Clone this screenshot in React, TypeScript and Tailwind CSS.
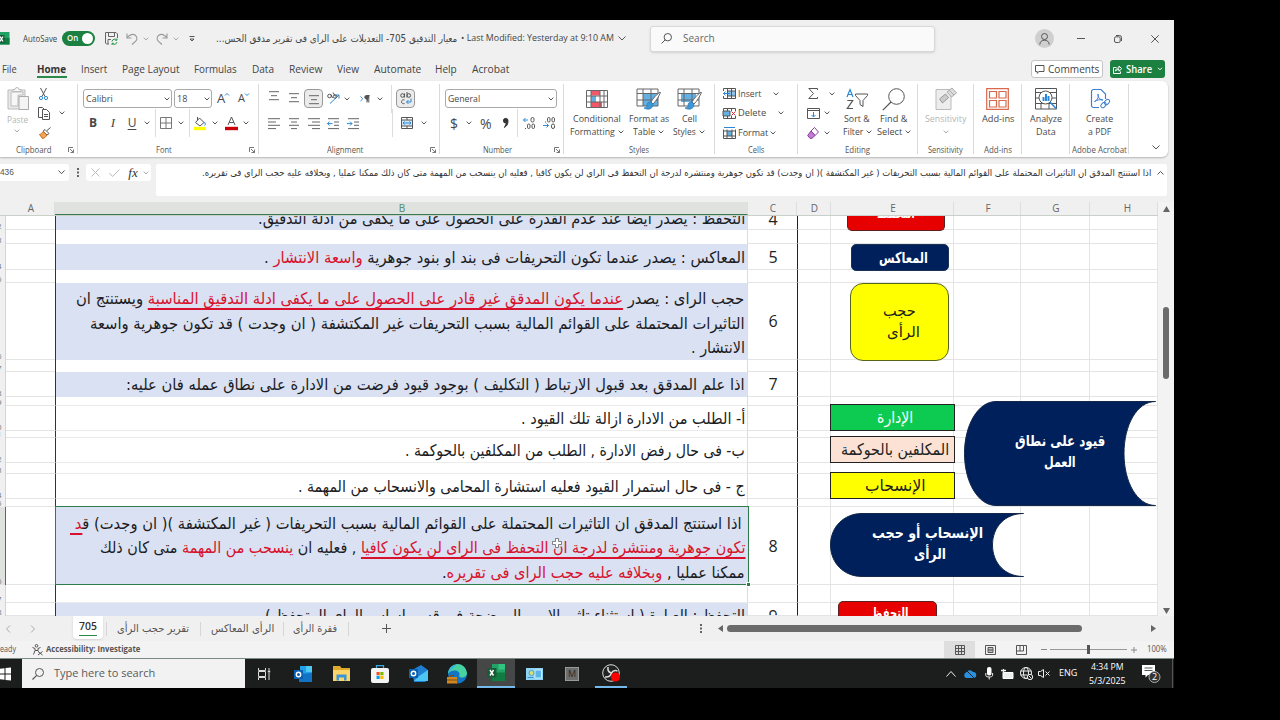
import { useLayoutEffect, useRef, type ReactNode } from 'react'
import clsx from 'clsx'

// Single line of text squeezed or stretched to a known width
function Fit({ w, rtl, className, children }: { w: number; rtl?: boolean; className?: string; children: ReactNode }) {
  const ref = useRef<HTMLSpanElement>(null)
  useLayoutEffect(() => {
    const el = ref.current
    if (el) el.style.transform = `scaleX(${w / el.offsetWidth})`
  }, [w])
  return (
    <span dir={rtl ? 'rtl' : 'ltr'} className={clsx('block shrink-0 whitespace-nowrap', className)} style={{ width: w }}>
      <span ref={ref} className={clsx('inline-block', rtl ? 'origin-right' : 'origin-left')}>
        {children}
      </span>
    </span>
  )
}

function Svg({ w, h = w, className, children }: { w: number; h?: number; className?: string; children: ReactNode }) {
  return (
    <svg width={w} height={h} viewBox={`0 0 ${w} ${h}`} fill="none" stroke="#555" strokeWidth="1" className={clsx('block shrink-0 overflow-visible', className)}>
      {children}
    </svg>
  )
}

function Cell({ className, children }: { className?: string; children?: ReactNode }) {
  return <div className={clsx('flex shrink-0 items-center justify-center', className)}>{children}</div>
}

function Chev({ light }: { light?: boolean }) {
  return (
    <Svg w={6} h={4}>
      <path d="M.7.6 3 3 5.3.6" stroke={light ? '#aaa' : '#555'} />
    </Svg>
  )
}

const Sep = () => <div className="h-[28px] w-px bg-[#dcdcdc]" />

function Lines({ rows }: { rows: number[][] }) {
  return (
    <Svg w={12} h={11}>
      {rows.map(([a, b], i) => (
        <path key={i} d={`M${a} ${i * (rows.length > 3 ? 3.3 : 4) + 0.7}H${b}`} stroke="#666" />
      ))}
    </Svg>
  )
}

const Launcher = () => (
  <Svg w={6}>
    <path d="M.5 5V.5H5M2 2l3.5 3.5M5.5 2.500v3h-3" stroke="#666" strokeWidth=".9" />
  </Svg>
)

function Group({ className, label, labelW, launcher, children }: { className: string; label?: string; labelW?: number; launcher?: boolean; children: ReactNode }) {
  return (
    <div className={clsx('flex shrink-0 flex-col', className)}>
      <div className="flex h-[61px] items-start">{children}</div>
      <div className="flex h-[15px] items-center">
        <div className="flex flex-1 justify-center">
          {label && (
            <Fit w={labelW ?? 30} className="text-[8.5px] leading-[14px] text-[#555]">
              {label}
            </Fit>
          )}
        </div>
        {launcher && (
          <div className="mr-[3px]">
            <Launcher />
          </div>
        )}
      </div>
    </div>
  )
}

const Rule = () => <div className="mt-[3px] h-[70px] w-px shrink-0 bg-[#dadada]" />

function Big({ className, icon, a, aw, b, bw, chev, dim }: { className: string; icon: ReactNode; a: string; aw: number; b?: string; bw?: number; chev?: boolean; dim?: boolean }) {
  return (
    <div className={clsx('flex shrink-0 flex-col items-center text-[9.5px] leading-[13px]', className, dim ? 'text-[#b5b5b5]' : 'text-[#484848]')}>
      <div className="flex h-[31px] items-center pt-[5px]">{icon}</div>
      <Fit w={aw}>{a}</Fit>
      <div className="flex h-[13px] items-center gap-[3px]">
        {b && <Fit w={bw ?? 20}>{b}</Fit>}
        {chev && <Chev light={dim} />}
      </div>
    </div>
  )
}

const TABS: [string, number, string][] = [
  ['File', 15, 'ml-[2px]'],
  ['Home', 29, 'ml-[20px]'],
  ['Insert', 26, 'ml-[15px]'],
  ['Page Layout', 58, 'ml-[15px]'],
  ['Formulas', 43, 'ml-[14px]'],
  ['Data', 22, 'ml-[15px]'],
  ['Review', 33, 'ml-[15px]'],
  ['View', 22, 'ml-[15px]'],
  ['Automate', 47, 'ml-[15px]'],
  ['Help', 22, 'ml-[14px]'],
  ['Acrobat', 37, 'ml-[15px]'],
]

function TitleBar() {
  return (
    <div className="flex h-[37px] shrink-0 items-center text-[#444]">
      <Svg w={10} h={13}>
        <path d="M0 0h9.5v12.500H0z" fill="#21a366" stroke="none" />
        <path d="M0 6h9.500v6.500H0z" fill="#107c41" stroke="none" />
        <path d="M0 3h4.500v8H0z" fill="#185c37" stroke="none" />
        <path d="m0 4.500 3 5m0-5-3 5" stroke="#fff" strokeWidth="1.300" />
      </Svg>
      <Fit w={34} className="ml-[13px] text-[9px]">AutoSave</Fit>
      <div className="ml-[5px] flex h-[15px] w-[33px] items-center justify-between rounded-full bg-[#1b8040] pr-[2px] pl-[5px]">
        <Fit w={11} className="text-[8.5px] font-semibold text-white">On</Fit>
        <div className="h-[11px] w-[11px] rounded-full bg-white" />
      </div>
      <Cell className="ml-[8px] w-[16px]">
        <Svg w={13}>
          <path d="M4 12H1.500L.5 11V.5H11L12.500 2v4M3.500.5v4h6v-4M3 12V7.500h3" stroke="#666" />
          <path d="M7 9.500a2.800 2.800 0 0 1 5-1.300V6.500m0 3.500a2.800 2.800 0 0 1-5 1.300V13m5-4.800h-2M7 11.300h2" stroke="#2f9a4f" />
        </Svg>
      </Cell>
      <Cell className="ml-[5px] w-[16px]">
        <Svg w={12}>
          <path d="M1 .5v4.500h4.500M1.200 4.700C3.500 1.500 7 .5 9.300 2.300c2.200 1.800 2 4.500.2 6L6 11.500" stroke="#999" strokeWidth="1.100" />
        </Svg>
      </Cell>
      <Cell className="w-[12px]"><Chev light /></Cell>
      <Cell className="ml-[2px] w-[16px]">
        <Svg w={12}>
          <path d="M11 .5v4.500H6.500M10.800 4.700C8.500 1.500 5 .5 2.700 2.300c-2.200 1.800-2 4.500-.2 6L6 11.500" stroke="#999" strokeWidth="1.100" />
        </Svg>
      </Cell>
      <Cell className="w-[12px]"><Chev light /></Cell>
      <Cell className="ml-[4px] w-[12px]">
        <Svg w={6} h={6}><path d="M.5.5h5M1 3l2 2 2-2z" /></Svg>
      </Cell>
      <Fit w={241} rtl className="ml-[18px] font-[DejaVu_Sans] text-[10px]">معيار التدقيق 705- التعديلات على الراى فى تقرير مدقق الحس...</Fit>
      <Fit w={153} className="ml-[4px] text-[9.5px]">• Last Modified: Yesterday at 9:10 AM</Fit>
      <Cell className="ml-[3px] w-[10px]">
        <Svg w={8} h={5}><path d="m.5.5 3.500 3.500L7.500.5" /></Svg>
      </Cell>
      <div className="ml-[23px] flex h-[26px] w-[285px] items-center rounded-[3px] border border-[#d8d8d8] bg-[#fafafa] pl-[10px] shadow-sm">
        <Svg w={11}><circle cx="6.800" cy="4.200" r="3.700" /><path d="M4.200 6.800.5 10.500" /></Svg>
        <Fit w={32} className="ml-[11px] text-[10px] text-[#666]">Search</Fit>
      </div>
      <div className="ml-[100px] flex h-[19px] w-[19px] items-center justify-center rounded-full bg-[#cfcfcf]">
        <Svg w={11} h={12}><circle cx="5.500" cy="3.500" r="3" /><path d="M.8 11.500C1 8.500 3 7.200 5.500 7.200s4.500 1.300 4.700 4.300" /></Svg>
      </div>
      <Cell className="ml-[19px] w-[16px]"><div className="h-px w-[8px] bg-[#555]" /></Cell>
      <Cell className="ml-[21px] w-[16px]">
        <Svg w={8}><rect x=".5" y="1.800" width="5.700" height="5.700" rx="1.500" /><path d="M2 .5h3.500a2 2 0 0 1 2 2V6" /></Svg>
      </Cell>
      <Cell className="ml-[21px] w-[16px]"><Svg w={8}><path d="m.3.3 7.400 7.400m0-7.400L.3 7.700" /></Svg></Cell>
    </div>
  )
}

function TabBar() {
  return (
    <div className="flex h-[24px] shrink-0 text-[10.5px] leading-[24px] text-[#444]">
      {TABS.map(([label, w, ml]) => (
        <div key={label} className={clsx('relative', ml, label === 'Home' && 'font-bold text-[#333]')}>
          <Fit w={w}>{label}</Fit>
          {label === 'Home' && <span className="absolute top-[19px] left-0 h-[2px] w-[30px] bg-[#2b8a4b]" />}
        </div>
      ))}
      <div className="ml-[522px] mt-[3px] flex h-[18px] w-[72px] items-center rounded-[3px] border border-[#c4c4c4] bg-white pl-[3px]">
        <Svg w={10} h={9}><path d="M.5.5h8.500v6H4L2.200 8.300V6.500H.5z" /></Svg>
        <Fit w={51} className="ml-[3px]">Comments</Fit>
      </div>
      <div className="ml-[7px] mt-[3px] flex h-[18px] w-[55px] items-center rounded-[3px] bg-[#1b8040] pl-[3px] text-white">
        <Svg w={9}><path d="M3.500 2.500H.5v6h7V6.500M2.500 6c.3-2 1.500-3 3.500-3V1l2.700 2.700L6 6.200V4.500C4.500 4.500 3.300 5 2.500 6z" stroke="#fff" /></Svg>
        <Fit w={26} className="ml-[4px] font-semibold">Share</Fit>
        <Svg w={6} h={4} className="ml-[5px]"><path d="M1 .8 3 2.800 5 .8" stroke="#fff" /></Svg>
      </div>
    </div>
  )
}

const TableIcon = ({ fill }: { fill: string }) => (
  <Svg w={25} h={22}>
    <path d={fill} fill="#63b0e3" stroke="none" />
    <path d="M1 1h21v17H1zM1 5.500h21M1 12h21M7 1v17M15 1v17" stroke="#666" />
    <path d="M24 4c-4 3-7 6.500-9 10l2 2c3-3 5.500-7 7.500-11.500z" fill="#fff" stroke="#666" />
    <path d="M15 14c-3-.5-4 1.500-4 3.500 0 1.500-1.500 2.500-3 2.500 3 2 9 2 9-4z" fill="#3d96d6" stroke="#2a7ab8" strokeWidth=".7" />
  </Svg>
)

function Ribbon() {
  return (
    <div className="flex h-[76px] w-[1168px] shrink-0 rounded-r-[6px] bg-white text-[#484848] shadow-[0_1px_2px_rgba(0,0,0,0.25)]">
      <Group className="w-[77px]" label="Clipboard" labelW={36} launcher>
        <div className="flex w-[34px] flex-col items-center pt-[6px]">
          <Svg w={23} h={23} className="ml-[3px]">
            <path d="M1 3h17v19H1z" fill="#e9e9e9" stroke="#bbb" />
            <path d="M6 4.500V2.500h2a2 2 0 0 1 4 0h2v2zM4 5v14h7V8h5V5z" fill="#f7f7f7" stroke="#bbb" />
            <path d="M12 9.500h9.500v13H12z" fill="#f4f4f4" stroke="#aaa" />
          </Svg>
          <Fit w={21} className="mt-[3px] text-[9.5px] leading-[13px] text-[#b5b5b5]">Paste</Fit>
          <div className="mt-[3px]"><Chev light /></div>
        </div>
        <div className="flex flex-col pt-[3px]">
          <Cell className="h-[19px] w-[19px]">
            <Svg w={9} h={12}>
              <path d="M1.500 0 6 8.500M7.500 0 3 8.500" /><circle cx="2" cy="10" r="1.600" stroke="#2b88d8" /><circle cx="7" cy="10" r="1.600" stroke="#2b88d8" />
            </Svg>
          </Cell>
          <div className="flex h-[20px] items-center">
            <Cell className="w-[19px]">
              <Svg w={12} h={13}><path d="M5 10.500H.5v-10H4.500l2 2M4.500 2.500h4l3 3v7h-7z" /><path d="M6 7.500h4M6 9.500h4" /></Svg>
            </Cell>
            <Cell className="w-[17px]"><Chev /></Cell>
          </div>
          <Cell className="h-[19px] w-[21px]">
            <Svg w={12} h={12}><path d="M11.500.5 8 3.500M6 2.500l4 4-2 1.500-4-3.700z" stroke="#555" /><path d="M4 4.500 7.800 8C7 10 5 11.500 3.500 11.500L.5 7.500C2 7.300 3 6 4 4.500z" fill="#f2a45c" stroke="#c96a18" /></Svg>
          </Cell>
        </div>
      </Group>
      <Rule />
      <Group className="w-[180px]" label="Font" labelW={16} launcher>
        <div className="flex flex-col pt-[8px]">
          <div className="flex h-[19px] items-center text-[9px]">
            <div className="ml-[5px] flex h-[19px] w-[89px] items-center justify-between rounded-[3px] border border-[#aaa] px-[2px] pr-[1px]">
              <Fit w={27}>Calibri</Fit><Chev />
            </div>
            <div className="ml-[2px] flex h-[19px] w-[38px] items-center justify-between rounded-[3px] border border-[#aaa] px-[2px] pr-[1px]">
              <Fit w={10}>18</Fit><Chev />
            </div>
            <Cell className="w-[21px] pl-[1px] text-[13px]">A<span className="-mt-2"><Svg w={4} h={3}><path d="M0 2.500 2 .5l2 2" stroke="#2b88d8" /></Svg></span></Cell>
            <Cell className="w-[21px] text-[11px]">A<span className="-mt-2"><Svg w={4} h={3}><path d="m0 .5 2 2 2-2" stroke="#2b88d8" /></Svg></span></Cell>
          </div>
          <div className="mt-[1px] flex h-[28px] items-center text-[12px]">
            <Cell className="ml-[5px] w-[20px] font-bold">B</Cell>
            <Cell className="w-[20px] font-[Liberation_Serif] text-[13px] italic">I</Cell>
            <Cell className="w-[18px] underline underline-offset-2">U</Cell>
            <Cell className="w-[12px]"><Chev /></Cell>
            <Cell className="w-[4px]"><Sep /></Cell>
            <Cell className="w-[18px]"><Svg w={12}><path d="M.5.5h11v11H.5zM6 .5v11M.5 6h11" stroke="#777" /></Svg></Cell>
            <Cell className="w-[12px]"><Chev /></Cell>
            <Cell className="w-[4px]"><Sep /></Cell>
            <Cell className="w-[18px]">
              <Svg w={12} h={13}><path d="m5.500 1 4.500 4.500L6 9 1.500 5.500zM3.500 0v3.500" /><path d="M10.500 5c1 1.500 1 3 0 3.500" stroke="#2b88d8" /><path d="M0 11.500h12" stroke="#ffff00" strokeWidth="3.400" /></Svg>
            </Cell>
            <Cell className="w-[11px]"><Chev /></Cell>
            <Cell className="w-[22px]">
              <Svg w={13} h={13}><path d="M3 8 6.500 0 10 8M4.200 5.500h4.600" /><path d="M0 11.500h13" stroke="#c8000b" strokeWidth="3.400" /></Svg>
            </Cell>
            <Cell className="w-[7px]"><Chev /></Cell>
          </div>
        </div>
      </Group>
      <Rule />
      <Group className="w-[180px]" label="Alignment" labelW={36} launcher>
        <div className="flex flex-col pt-[8px]">
          <div className="flex h-[19px] items-center">
            <Cell className="ml-[5px] h-[15px] w-[20px] items-start"><Lines rows={[[1, 11], [3, 9], [1, 11]]} /></Cell>
            <Cell className="w-[20px]"><Lines rows={[[1, 11], [3, 9], [1, 11]]} /></Cell>
            <Cell className="h-[19px] w-[19px] items-end rounded-[4px] border border-[#999] bg-[#ebebeb] pb-[1px]"><Lines rows={[[1, 11], [3, 9], [1, 11]]} /></Cell>
            <Cell className="w-[20px]">
              <Svg w={13}><path d="M3 11.500 12 3m-3.500 0H12v3.500" stroke="#2b88d8" /><circle cx="2.500" cy="4" r="1.800" /><path d="M4 2.500 5.500 6M6 .5l2.500 4" /><circle cx="8" cy="4.500" r="1.700" /></Svg>
            </Cell>
            <Cell className="w-[7px]"><Chev /></Cell>
            <Cell className="ml-[5px] w-[20px]"><Svg w={10} h={8}><path d="m.5 1.500 2.300 2.300L.5 6" stroke="#2b88d8" /><path d="M9.500.5H6.500a1.700 1.700 0 0 0 0 3.500H7V.5v7m1.800-7v7" fill="#555" /></Svg></Cell>
            <Cell className="w-[10px]"><Chev /></Cell>
            <Cell className="ml-[4px] w-[4px]"><Sep /></Cell>
            <Cell className="ml-[3px] h-[19px] w-[19px] rounded-[4px] border border-[#999] bg-[#ebebeb]">
              <Svg w={12} h={13}><circle cx="2.500" cy="3.500" r="1.800" /><path d="M4.500 1.500v4M7 0v5.500" /><circle cx="8.800" cy="3.500" r="1.800" /><path d="M4.500 8a2 2 0 1 0 0 3.500" /><path d="M11 6.500v3.500H6.500m2-2-2 2 2 2" stroke="#2b88d8" /></Svg>
            </Cell>
          </div>
          <div className="mt-[1px] flex h-[28px] items-center">
            <Cell className="ml-[5px] w-[20px]"><Lines rows={[[0, 12], [0, 8], [0, 12], [0, 8]]} /></Cell>
            <Cell className="w-[20px]"><Lines rows={[[1, 11], [3, 9], [1, 11], [3, 9]]} /></Cell>
            <Cell className="w-[19px]"><Lines rows={[[0, 12], [4, 12], [0, 12], [4, 12]]} /></Cell>
            <Cell className="w-[20px]"><Svg w={12} h={11}><path d="M1 .7h11M7 4h5M7 7.300h5M1 10.600h11" stroke="#666" /><path d="M5.500 5.600H.5m2-2-2 2 2 2" stroke="#2b88d8" /></Svg></Cell>
            <Cell className="w-[20px]"><Svg w={12} h={11}><path d="M1 .7h11M7 4h5M7 7.300h5M1 10.600h11" stroke="#666" /><path d="M0 5.600h5m-2-2 2 2-2 2" stroke="#2b88d8" /></Svg></Cell>
            <Cell className="ml-[27px] w-[4px]"><Sep /></Cell>
            <Cell className="ml-[3px] w-[19px]"><Svg w={12}><path d="M0 3h12v6H0z" fill="#cfe6f7" stroke="none" /><path d="M.5.5h11v11H.5zM.5 3h11M.5 9h11M6 .5V3M6 9v2.500" /><path d="M2 6h8M3.500 4.500 2 6l1.500 1.500m5-3L10 6 8.500 7.500" stroke="#2b88d8" /></Svg></Cell>
            <Cell className="w-[16px]"><Chev /></Cell>
          </div>
        </div>
      </Group>
      <Rule />
      <Group className="w-[123px]" label="Number" labelW={29} launcher>
        <div className="flex flex-col pt-[8px]">
          <div className="ml-[5px] flex h-[19px] w-[112px] items-center justify-between rounded-[3px] border border-[#aaa] px-[2px] text-[9px]">
            <Fit w={32}>General</Fit><Chev />
          </div>
          <div className="mt-[1px] flex h-[28px] items-center text-[14px]">
            <Cell className="ml-[4px] w-[20px]">$</Cell>
            <Cell className="w-[10px]"><Chev /></Cell>
            <Cell className="ml-[1px] w-[22px]"><Fit w={12}>%</Fit></Cell>
            <Cell className="w-[18px]"><Svg w={6} h={10}><path d="M1 9.500c2.500-1 4-3 4-6.500A2.300 2.300 0 1 0 3 5" fill="#333" stroke="#333" /></Svg></Cell>
            <Cell className="w-[4px]"><Sep /></Cell>
            <Cell className="w-[19px]"><Svg w={12} h={12}><path d="M5 3H.5m2-2-2 2 2 2" stroke="#2b88d8" /><rect x="8" y=".5" width="3" height="4.500" rx="1.500" /><rect x="4.500" y="7" width="2.500" height="4.500" rx="1.200" /><rect x="9" y="7" width="2.500" height="4.500" rx="1.200" /><path d="M2 11.500h1" /></Svg></Cell>
            <Cell className="w-[21px]"><Svg w={12} h={12}><path d="M0 8.500h5.500m-2-2 2 2-2 2" stroke="#2b88d8" /><rect x="4.500" y=".5" width="2.500" height="4.500" rx="1.200" /><rect x="9" y=".5" width="2.500" height="4.500" rx="1.200" /><rect x="8.500" y="7" width="3" height="4.500" rx="1.500" /><path d="M2 5h1" /></Svg></Cell>
          </div>
        </div>
      </Group>
      <Rule />
      <Group className="w-[150px]" label="Styles" labelW={20}>
        <Big className="ml-[6px] w-[54px]" a="Conditional" aw={48} b="Formatting" bw={45} chev
          icon={<Svg w={22} h={18}><path d="M5 .5h9v5H5zM5 12h11v5.500H5z" fill="#f1596b" stroke="none" /><path d="M5 6h5v6H5z" fill="#63b0e3" stroke="none" /><path d="M.5.5h21v17H.5zM.5 6h21M.5 12h21M5 .5v17M14 .5v17M18 .5v17" stroke="#666" /></Svg>} />
        <Big className="w-[49px]" a="Format as" aw={40} b="Table" bw={22} chev icon={<TableIcon fill="M7 5.500h15V18H7z" />} />
        <Big className="w-[32px]" a="Cell" aw={15} b="Styles" bw={23} chev icon={<TableIcon fill="M4 5h15v9H4z" />} />
      </Group>
      <Rule />
      <Group className="w-[82px]" label="Cells" labelW={16}>
        <div className="flex flex-col pt-[3px] pl-[8px] text-[9px]">
          <div className="flex h-[19px] items-center">
            <Svg w={13} h={11}><path d="M4 3h8.500v5H4z" fill="#8cc4ea" stroke="none" /><path d="M.5 3V.5h12v10H.5V8M4.500.5v10M8.500.5v10M4 3h8.500M4 8h8.500" /><path d="M7 5.500H.5m2-2-2 2 2 2" stroke="#2b88d8" /></Svg>
            <Fit w={23} className="ml-[2px]">Insert</Fit><span className="ml-[12px]"><Chev /></span>
          </div>
          <div className="flex h-[20px] items-center">
            <Svg w={13} h={11}><path d="M0 3h7v5H0z" fill="#63b0e3" stroke="none" /><path d="M.5 3V.5h12V3M.5 8v2.500h12V8M4.500.5V3M8.500.5V3M4.500 8v2.500M8.500 8v2.500M0 3h7v5H0z" /><path d="m8.500 3.500 4 4m0-4-4 4" stroke="#d13438" /></Svg>
            <Fit w={28} className="ml-[2px]">Delete</Fit><span className="ml-[12px]"><Chev /></span>
          </div>
          <div className="flex h-[19px] items-center">
            <Svg w={13} h={12}><path d="M4 4h5v5H4z" fill="#63b0e3" stroke="none" /><path d="M.5 2.500v9h12v-9M.5 4h12M.5 9h12M4 2.500v9M9 2.500v9" /><path d="M1 .5h11" stroke="#2b88d8" /></Svg>
            <Fit w={30} className="ml-[2px]">Format</Fit><span className="ml-[2px]"><Chev /></span>
          </div>
        </div>
      </Group>
      <Rule />
      <Group className="w-[119px]" label="Editing" labelW={25}>
        <div className="flex w-[40px] flex-col pt-[3px]">
          <div className="flex h-[19px] items-center"><Cell className="ml-[5px] w-[20px]"><Svg w={10} h={11}><path d="M9.500 2V.5H.8L5.500 5.500.8 10.500h8.700V9" /></Svg></Cell><Cell className="w-[18px]"><Chev /></Cell></div>
          <div className="flex h-[20px] items-center"><Cell className="ml-[5px] w-[20px]"><Svg w={13} h={11}><path d="M.5.5h12v10H.5zM.5 2.500h12" /><path d="M6.500 4v5m-2-2 2 2 2-2" stroke="#2b88d8" /></Svg></Cell><Cell className="w-[8px]"><Chev /></Cell></div>
          <div className="flex h-[19px] items-center"><Cell className="ml-[5px] w-[20px]"><Svg w={12} h={12}><path d="M7.500.5 11.500 5 8 8.500 4 4z" fill="#fff" stroke="#8a3ca0" /><path d="M4 4 8 8.500 5 11.300H3L.7 8.500z" fill="#c57bd6" stroke="#8a3ca0" /></Svg></Cell><Cell className="w-[8px]"><Chev /></Cell></div>
        </div>
        <Big className="w-[38px]" a="Sort &" aw={26} b="Filter" bw={20} chev
          icon={<Svg w={22} h={22}><path d="M1 9 4 1.500 7 9M2 6.500h4" stroke="#2b88d8" strokeWidth="1.200" /><path d="M1.300 12.500h5.400L1.300 20.500h5.700" strokeWidth="1.200" /><path d="M9.500 6h12v1.500L17 12.500v6L14 16.500v-4L9.500 7.500z" /></Svg>} />
        <Big className="w-[35px]" a="Find &" aw={27} b="Select" bw={25} chev
          icon={<Svg w={23} h={23}><circle cx="14.500" cy="8.500" r="7.800" /><path d="M9 14 .8 22.200" strokeWidth="1.200" /></Svg>} />
      </Group>
      <Rule />
      <Group className="w-[55px]" label="Sensitivity" labelW={35}>
        <Big className="w-[55px]" a="Sensitivity" aw={41} chev dim
          icon={<Svg w={22} h={22}><path d="M1 1.500h15v20H1z" fill="#ededed" stroke="#bbb" /><path d="m4.500 11 6-5 3 3.500-6 5.500z" fill="#ccc" stroke="#999" /><path d="m12 4 5-4 4.500 5-5 4z" fill="#ddd" stroke="#aaa" /><path d="m14 2 5 5" stroke="#aaa" /></Svg>} />
      </Group>
      <Rule />
      <Group className="w-[47px]" label="Add-ins" labelW={28}>
        <Big className="w-[47px]" a="Add-ins" aw={32}
          icon={<Svg w={23} h={22}><path d="M.7.7h21.600v20.600H.7zM3.500 3.500h7v6.500h-7zM13 3.500h7v6.500h-7zM3.500 12.500h7V19h-7zM13 12.500h7V19h-7z" stroke="#d9694c" strokeWidth="1.200" /></Svg>} />
      </Group>
      <Rule />
      <Group className="w-[47px]">
        <Big className="w-[47px]" a="Analyze" aw={32} b="Data" bw={20}
          icon={<Svg w={22} h={22}><path d="M.5.5h21v20.500H.5zM.5 4.500h21M.5 10h21M.5 15.500h21M6 15.500v5.500M14 15.500v5.500" /><circle cx="10.500" cy="9.500" r="6.500" fill="#fff" /><path d="M7.500 9h2v4h-2zM10 6h2v7h-2zM12.500 8h2v5h-2z" fill="#2b88d8" stroke="none" /><path d="m15 14 6.500 7" stroke="#2b88d8" strokeWidth="1.500" /></Svg>} />
      </Group>
      <Rule />
      <Group className="w-[58px]" label="Adobe Acrobat" labelW={55}>
        <Big className="w-[58px]" a="Create" aw={27} b="a PDF" bw={23}
          icon={<Svg w={20} h={22} className="ml-1"><path d="M8 19.500H2.500a2 2 0 0 1-2-2v-14a2 2 0 0 1 2-2H10l4.500 4.500v5" stroke="#3f7fd0" strokeWidth="1.200" /><path d="M3.500 13.500C7 12 8 8 7 6c-.5 3 2 6 5 6-3-.8-6 0-8.500 1.500z" stroke="#3f7fd0" /><rect x="9.500" y="15" width="6" height="4" rx="2" transform="rotate(-45 12.500 17)" stroke="#3f7fd0" /><rect x="13" y="12" width="6" height="4" rx="2" transform="rotate(-45 16 14)" stroke="#3f7fd0" /></Svg>} />
      </Group>
      <Rule />
      <div className="flex flex-1 items-end justify-end pr-[8px] pb-[7px]">
        <Svg w={8} h={5}><path d="m.5.5 3.500 3.500L7.500.5" /></Svg>
      </div>
    </div>
  )
}

function FormulaBar() {
  return (
    <div className="flex h-[45px] shrink-0 items-start pt-[7px]">
      <div className="flex h-[17px] w-[69px] items-center justify-between rounded-r-[3px] bg-white pr-[4px] font-[Liberation_Sans] text-[9.5px] text-[#555]">
        <Fit w={14}>436</Fit>
        <Svg w={7} h={5}><path d="m.5.5 3 3.200 3-3.200" /></Svg>
      </div>
      <Cell className="ml-[6px] h-[17px] w-[6px]"><Svg w={2} h={9}><path d="M1 0v2M1 3.500v2M1 7v2" strokeWidth="1.800" /></Svg></Cell>
      <div className="ml-[5px] flex h-[17px] w-[65px] items-center rounded-[3px] bg-white">
        <Cell className="w-[19px]"><Svg w={9}><path d="m.5.5 8 8m0-8-8 8" stroke="#bbb" /></Svg></Cell>
        <Cell className="w-[19px]"><Svg w={11} h={8}><path d="m.5 4 3 3.500L10.500.5" stroke="#bbb" /></Svg></Cell>
        <Cell className="w-[18px] font-[Liberation_Serif] text-[13px] italic text-[#333]">fx</Cell>
        <Cell className="w-[8px]"><Chev light /></Cell>
      </div>
      <div className="ml-[5px] flex h-[32px] w-[1011px] items-start justify-end rounded-[2px] bg-white pr-[3px]">
        <Fit w={949} rtl className="font-[DejaVu_Sans] text-[9.5px] leading-[17px] text-[#333]">
          اذا استنتج المدقق ان التاثيرات المحتملة على القوائم المالية بسبب التحريفات ( غير المكتشفة )( ان وجدت) قد تكون جوهرية ومنتشره لدرجة ان التحفظ فى الراى لن يكون كافيا , فعليه ان ينسحب من المهمة متى كان ذلك ممكنا عمليا , وبخلافه عليه حجب الراى فى تقريره.
        </Fit>
        <Svg w={7} h={4} className="mt-[7px] ml-[6px]"><path d="M.5 3.500 3.500.5l3 3" /></Svg>
      </div>
    </div>
  )
}

const COLS: [string, string][] = [
  ['A', 'w-[49px]'],
  ['B', 'w-[693px]'],
  ['C', 'w-[49px]'],
  ['D', 'w-[34px]'],
  ['E', 'w-[123px]'],
  ['F', 'w-[67px]'],
  ['G', 'w-[69px]'],
  ['H', 'w-[68px]'],
]

const Red = ({ u, children }: { u?: boolean; children: ReactNode }) => (
  <span className={clsx('text-[#d8122c]', u && 'underline decoration-[1.5px] underline-offset-[4px]')}>{children}</span>
)

interface Row {
  h: string
  num?: string
  fill?: boolean
  head?: string
  lines?: { w: number; pr?: string; text: ReactNode }[]
  pt?: string
  shift?: string
}

const ROWS: Row[] = [
  { h: 'h-[14px]', num: '4', fill: true, head: '2', shift: '-mt-[8px]', lines: [{ w: 487, text: 'التحفظ : يصدر ايضا عند عدم القدرة على الحصول على ما يكفى من ادلة التدقيق.' }] },
  { h: 'h-[14px]', head: '3' },
  { h: 'h-[26px]', num: '5', fill: true, head: '4', pt: 'pt-[2px]', lines: [{ w: 481, text: <>المعاكس : يصدر عندما تكون التحريفات فى بند او بنود جوهرية <Red>واسعة الانتشار</Red> .</> }] },
  { h: 'h-[13px]', head: '5' },
  {
    h: 'h-[77px]', num: '6', fill: true, head: '6', pt: 'pt-[4px]',
    lines: [
      { w: 668, pr: 'pr-[3px]', text: <>حجب الراى : يصدر <Red u>عندما يكون المدقق غير قادر على الحصول على ما يكفى ادلة التدقيق المناسبة</Red> ويستنتج ان</> },
      { w: 655, text: 'التاثيرات المحتملة على القوائم المالية بسبب التحريفات غير المكتشفة ( ان وجدت ) قد تكون جوهرية واسعة' },
      { w: 54, text: 'الانتشار .' },
    ],
  },
  { h: 'h-[12px]', head: '7' },
  { h: 'h-[25px]', num: '7', fill: true, head: '8', pt: 'pt-[1px]', lines: [{ w: 619, text: 'اذا علم المدقق بعد قبول الارتباط ( التكليف ) بوجود قيود فرضت من الادارة على نطاق عمله فان عليه:' }] },
  { h: 'h-[9px]', head: '9' },
  { h: 'h-[25px]', head: '0', pt: 'pt-[1px]', lines: [{ w: 224, text: 'أ- الطلب من الادارة ازالة تلك القيود .' }] },
  { h: 'h-[7px]', head: '1' },
  { h: 'h-[25px]', head: '2', pt: 'pt-[2px]', lines: [{ w: 340, text: 'ب- فى حال رفض الادارة , الطلب من المكلفين بالحوكمة .' }] },
  { h: 'h-[11px]', head: '3' },
  { h: 'h-[25px]', head: '4', pt: 'pt-[2px]', lines: [{ w: 447, text: 'ج - فى حال استمرار القيود فعليه استشارة المحامى والانسحاب من المهمة .' }] },
  { h: 'h-[8px]', head: '5' },
  {
    h: 'h-[78px]', num: '8', fill: true, head: '6', pt: 'pt-[4px]',
    lines: [
      { w: 672, pr: 'pr-[5px]', text: <>اذا استنتج المدقق ان التاثيرات المحتملة على القوائم المالية بسبب التحريفات ( غير المكتشفة )( ان وجدت) ق<Red u>د&nbsp;</Red></> },
      { w: 646, text: <><Red u>تكون جوهرية ومنتشرة لدرجة ان التحفظ فى الراى لن يكون كافيا</Red> , فعليه ان <Red>ينسحب من المهمة</Red> متى كان ذلك</> },
      { w: 303, text: <>ممكنا عمليا , <Red>وبخلافه عليه حجب الراى فى تقريره</Red>.</> },
    ],
  },
  { h: 'h-[18px]', head: '7' },
  { h: 'h-[13px]', num: '9', fill: true, head: '8', shift: 'mt-[13px]', lines: [{ w: 480, text: 'التحفظ : العبارة (باستثناء تاثير الامور الموضحة فى قسم اساس الراى المتحفظ )' }] },
]

function Sheet() {
  return (
    <div className="flex h-[414px] shrink-0">
      <div className="relative flex w-[1158px] flex-col overflow-hidden">
        <div className="flex h-[14px] shrink-0 border-b border-[#c9cfc9] text-[10px] leading-[13px] text-[#666]">
          <div className="w-[6px]" />
          {COLS.map(([c, w]) => (
            <div
              key={c}
              className={clsx(
                'flex shrink-0 items-center justify-center border-r border-[#dedede]',
                w,
                c === 'H' ? 'pl-[8px]' : 'pl-[2px]',
                c === 'B' && 'border-b border-b-[#3a7d50] bg-[#dfe2df] text-[#4f8a63]'
              )}
            >
              {c}
            </div>
          ))}
        </div>
        <div className="flex h-[400px] shrink-0 flex-col bg-white">
          {ROWS.map((r, i) => (
            <div key={i} className={clsx('flex shrink-0', r.h)}>
              <div className={clsx('flex w-[6px] items-end overflow-hidden border-r text-[8px] leading-[8px] text-[#777]', r.num === '8' ? 'border-[#3a7d50] bg-[#dfe2df]' : 'border-[#d4d4d4] bg-[#f0f0f0]')}>
                <span className="-ml-[3px]">{r.head}</span>
              </div>
              <div className="w-[49px] border-b border-[#e4e4e4]" />
              <div className={clsx('flex w-[693px] flex-col justify-center overflow-hidden border-r border-l border-r-[#dcdcdc] border-l-[#333]', r.pt, r.fill ? 'bg-[#d9e1f2]' : i > 6 && 'border-b border-b-[#ececec]')}>
                {r.lines?.map((l, k) => (
                  <div key={k} className={clsx('flex h-[24.5px] shrink-0 items-center justify-end', l.pr ?? 'pr-[2px]', r.shift)}>
                    <Fit w={l.w} rtl className="font-[DejaVu_Sans] text-[16px] leading-[24px] text-[#1c1c24]">{l.text}</Fit>
                  </div>
                ))}
              </div>
              <div className="flex w-[50px] items-center justify-center overflow-hidden border-r border-b border-r-[#222] border-b-[#e4e4e4] pl-[1px] text-[16px] text-[#222]">
                {r.num && <span className={clsx('h-[24px] leading-[25px]', r.shift)}>{r.num}</span>}
              </div>
              {COLS.slice(3).map(([c, w]) => (
                <div key={c} className={clsx('shrink-0 border-r border-b border-[#e4e4e4]', c === 'D' ? 'w-[33px]' : w)} />
              ))}
            </div>
          ))}
        </div>
        <Shapes />
      </div>
      <div className="flex w-[16px] flex-col items-center bg-[#f3f3f3] pt-[4px]">
        <Svg w={7} h={6}><path d="M3.500 0 7 6H0z" fill="#666" stroke="none" /></Svg>
        <div className="mt-[95px] h-[72px] w-[6px] rounded-full bg-[#6b6b6b]" />
        <Svg w={7} h={6} className="mt-[229px]"><path d="M3.500 6 7 0H0z" fill="#666" stroke="none" /></Svg>
      </div>
    </div>
  )
}

// Drawing objects that float over the cells; origin is the top of the column headers
function Shapes() {
  return (
    <div className="font-[DejaVu_Sans]">
      <div className="absolute top-[14px] left-[847px] flex h-[15px] w-[98px] items-start justify-center overflow-hidden rounded-b-[5px] border border-t-0 border-[#5b2020] bg-[#e60000] text-white">
        <Fit w={38} rtl className="-mt-[13px] text-[14px] leading-[20px] font-bold underline">التحفظ</Fit>
      </div>
      <div className="absolute top-[42px] left-[851px] flex h-[27px] w-[98px] items-center justify-center rounded-[5px] border border-[#1a3354] bg-[#00205b] text-white">
        <Fit w={49} rtl className="ml-[6px] text-[15px] leading-[24px] font-bold">المعاكس</Fit>
      </div>
      <div className="absolute top-[81px] left-[850px] flex h-[78px] w-[99px] flex-col items-center rounded-[13px] border border-[#55651c] bg-[#ffff00] pt-[17px] text-[15px] leading-[21px] text-[#222]">
        <Fit w={33} rtl>حجب</Fit>
        <Fit w={33} rtl className="ml-[8px]">الرأى</Fit>
      </div>
      <div className="absolute top-[202px] left-[830px] flex h-[27px] w-[125px] items-center justify-center border border-[#222] bg-[#0dcb50] text-white">
        <Fit w={36} rtl className="ml-[5px] text-[16px]">الإدارة</Fit>
      </div>
      <div className="absolute top-[234px] left-[830px] flex h-[27px] w-[125px] items-center justify-center border border-[#222] bg-[#fbe2d5] text-[#222]">
        <Fit w={108} rtl className="ml-[6px] text-[16px]">المكلفين بالحوكمة</Fit>
      </div>
      <div className="absolute top-[270px] left-[830px] flex h-[27px] w-[125px] items-center justify-center border border-[#222] bg-[#ffff00] text-[#222]">
        <Fit w={61} rtl className="ml-[6px] text-[16px]">الإنسحاب</Fit>
      </div>
      <div className="absolute top-[199px] left-[964px] h-[105px] w-[192px]">
        <Svg w={192} h={105}><path d="M191.500.5H32C14 .5.5 24 .5 52.500S14 104.500 32 104.500H191.500C173 104.500 160 81 160 52.500S173 .5 191.500.5z" fill="#00205b" stroke="#14294a" /></Svg>
      </div>
      <div className="absolute top-[229px] left-[1015px] flex w-[90px] flex-col items-center text-[15px] leading-[21px] font-bold text-white">
        <Fit w={90} rtl>قيود على نطاق</Fit>
        <Fit w={32} rtl>العمل</Fit>
      </div>
      <div className="absolute top-[311px] left-[830px] h-[64px] w-[194px]">
        <Svg w={194} h={64}><path d="M193.500.5H32C14 .5.5 14 .5 32S14 63.500 32 63.500H193.500C175 63.500 162.500 50 162.500 32S175 .5 193.500.5z" fill="#00205b" stroke="#14294a" /></Svg>
      </div>
      <div className="absolute top-[321px] left-[872px] flex w-[111px] flex-col items-center text-[15px] leading-[21px] font-bold text-white">
        <Fit w={111} rtl>الإنسحاب أو حجب</Fit>
        <Fit w={32} rtl className="ml-[4px]">الرأى</Fit>
      </div>
      <div className="absolute top-[399px] left-[838px] flex h-[30px] w-[99px] justify-center rounded-t-[5px] border border-[#5b2020] bg-[#e60000] text-white">
        <Fit w={37} rtl className="ml-[5px] text-[15px] leading-[22px] font-bold">التحفظ</Fit>
      </div>
      <div className="absolute top-[304px] left-[55px] h-[79px] w-[694px] border border-[#2f7d4a]" />
      <div className="absolute top-[380px] left-[746px] h-[5px] w-[5px] border border-white bg-[#2f7d4a]" />
      <div className="absolute top-[336px] left-[552px]">
        <Svg w={10}><path d="M3.500.5h3v3h3v3h-3v3h-3v-3h-3v-3h3z" fill="#fff" stroke="#666" strokeWidth=".8" /></Svg>
      </div>
    </div>
  )
}

function SheetTabs() {
  return (
    <div className="flex h-[25px] shrink-0 items-center bg-[#f0f0f0] font-[DejaVu_Sans] text-[10.5px] text-[#555]">
      <Cell className="w-[15px]"><Svg w={4} h={8}><path d="M4 .5.5 4 4 7.500" stroke="#aaa" /></Svg></Cell>
      <Cell className="ml-[10px] w-[15px]"><Svg w={4} h={8}><path d="M0 .5 3.500 4 0 7.500" stroke="#aaa" /></Svg></Cell>
      <div className="-mt-[2px] ml-[33px] flex h-[23px] w-[30px] flex-col items-center rounded-b-[4px] bg-white font-['Open_Sans'] text-[11px] leading-[18px] font-semibold text-[#333] shadow-sm">
        <Fit w={18} className="mt-[1px]">705</Fit>
        <div className="h-px w-[18px] bg-[#2b8a4b]" />
      </div>
      <div className="ml-[3px] h-[14px] w-px bg-[#d6d6d6]" />
      <Fit w={72} rtl className="ml-[10px]">تقرير حجب الرأى</Fit>
      <div className="ml-[11px] h-[14px] w-px bg-[#d6d6d6]" />
      <Fit w={63} rtl className="ml-[10px]">الرأى المعاكس</Fit>
      <div className="ml-[9px] h-[14px] w-px bg-[#d6d6d6]" />
      <Fit w={44} rtl className="ml-[9px]">فقرة الرأى</Fit>
      <div className="ml-[11px] h-[14px] w-px bg-[#d6d6d6]" />
      <Cell className="ml-[29px] w-[16px]"><Svg w={9}><path d="M4.500 0v9M0 4.500h9" /></Svg></Cell>
      <Cell className="ml-[299px] w-[16px]"><Svg w={2} h={9}><path d="M1 0v2M1 3.500v2M1 7v2" strokeWidth="1.800" /></Svg></Cell>
      <Cell className="ml-[5px] w-[12px]"><Svg w={5} h={7}><path d="M0 3.500 5 0v7z" fill="#666" stroke="none" /></Svg></Cell>
      <div className="ml-px h-[7px] w-[355px] rounded-full bg-[#6b6b6b]" />
      <Cell className="ml-[65px] w-[12px]"><Svg w={5} h={7}><path d="M5 3.500 0 0v7z" fill="#666" stroke="none" /></Svg></Cell>
    </div>
  )
}

function StatusBar() {
  return (
    <div className="flex h-[17px] shrink-0 items-center bg-[#f3f3f3] text-[8.5px] text-[#555]">
      <Fit w={16}>eady</Fit>
      <Svg w={11} className="ml-[16px]"><circle cx="4.500" cy="1.800" r="1.300" /><path d="M.5 3.500 3 4.500v2L1.500 10.500M8.500 3.500 6 4.500v2l.5 1M6 7.500l4.500 3.500m0-3.500L6 11M3 6.500h3" /></Svg>
      <Fit w={94} className="ml-[3px] font-bold">Accessibility: Investigate</Fit>
      <Cell className="ml-[804px] h-[17px] w-[31px] bg-[#dedede]"><Svg w={10}><path d="M.5.5h9v9h-9zM3.500.5v9M6.500.5v9M.5 3.500h9M.5 6.500h9" /></Svg></Cell>
      <Cell className="w-[31px]"><Svg w={11} h={10}><path d="M.5.5h10v9H.500zM3 2.500h5v5H3zM3 4.200h5M3 5.800h5" /></Svg></Cell>
      <Cell className="w-[31px]"><Svg w={11} h={10}><path d="M.5.5h10v9H.500zM4 .5v5.500h3.500V.5M.5 6H4" /></Svg></Cell>
      <Cell className="ml-[3px] w-[8px]"><div className="h-px w-[6px] bg-[#888]" /></Cell>
      <div className="ml-[2px] flex h-[10px] w-[77px] items-center justify-center bg-[linear-gradient(#999,#999)] bg-[length:100%_1px] bg-center bg-no-repeat">
        <div className="h-[9px] w-[3px] bg-[#555]" />
      </div>
      <Cell className="ml-[2px] w-[10px]"><Svg w={6}><path d="M3 0v6M0 3h6" stroke="#888" /></Svg></Cell>
      <Fit w={20} className="ml-[8px]">100%</Fit>
    </div>
  )
}

function Taskbar() {
  return (
    <div className="flex h-[30px] shrink-0 items-center border-t border-[#7d8a8a] bg-[#1c1d1d] text-white">
      <Cell className="w-[22px] justify-start"><Svg w={11} h={12}><path d="M0 .8 4.500.2v5.300H0zM5.500 0 11-.6v6.100H5.500zM0 6.500h4.500v5.300L0 11.200zM5.500 6.500H11v6.100L5.500 12z" fill="#fff" stroke="none" /></Svg></Cell>
      <div className="flex h-full w-[223px] items-center bg-[#f2f2f2] pl-[10px]">
        <Svg w={12}><circle cx="7.500" cy="4.500" r="4" /><path d="M4.700 7.300.5 11.500" strokeWidth="1.200" /></Svg>
        <Fit w={101} className="ml-[10px] text-[11px] text-[#5a5a5a]">Type here to search</Fit>
      </div>
      <Cell className="w-[38px]"><Svg w={13} h={12}><path d="M.5 0v2.500h7V0M.5 3.500h7v5h-7zM.5 12V9.500h7V12M11 0v2M11 5v7" stroke="#ddd" /><path d="M9.800 2.500h2.400v2H9.800z" fill="#ddd" stroke="none" /></Svg></Cell>
      <Cell className="w-[39px]">
        <Svg w={18} h={16}><path d="M6 0h12v11H6z" fill="#1fa0e8" stroke="none" /><path d="M12 0h6v6h-6z" fill="#50c8f5" stroke="none" /><path d="m5 8 13-1v9H5z" fill="#1272c4" stroke="none" /><path d="M0 4h9v9H0z" fill="#0a5fae" stroke="none" /><circle cx="4.500" cy="8.500" r="2.200" stroke="#fff" strokeWidth="1.400" /></Svg>
      </Cell>
      <Cell className="w-[39px]">
        <Svg w={17} h={15}><path d="M0 0h7l1.500 2H17v13H0z" fill="#e0a92c" stroke="none" /><path d="M0 4h17v11H0z" fill="#fbd567" stroke="none" /><path d="M3.500 14.500V8.500h10v6H11v-3H6v3z" fill="#3a94d8" stroke="none" /></Svg>
      </Cell>
      <Cell className="w-[38px]">
        <Svg w={18} h={18}><path d="M5.500 4V.7h7V4" stroke="#3aa9e0" strokeWidth="1.300" /><rect y="3" width="18" height="15" rx="2" fill="#f4f4f4" stroke="none" /><path d="M5.500 7H8.700v3.200H5.500z" fill="#f25022" stroke="none" /><path d="M9.300 7h3.200v3.200H9.300z" fill="#7fba00" stroke="none" /><path d="M5.500 10.800h3.200V14H5.500z" fill="#00a4ef" stroke="none" /><path d="M9.300 10.800h3.200V14H9.300z" fill="#ffb900" stroke="none" /></Svg>
      </Cell>
      <Cell className="w-[39px]">
        <Svg w={19} h={17}><path d="M3 5 12 0l7 5v10L16 17H5z" fill="#1f7ed0" stroke="none" /><path d="m10 11 9-6v11H5z" fill="#4cc6f4" stroke="none" /><path d="M0 4h9v9H0z" fill="#0a5fae" stroke="none" /><circle cx="4.500" cy="8.500" r="2.200" stroke="#fff" strokeWidth="1.400" /></Svg>
      </Cell>
      <Cell className="w-[38px]">
        <Svg w={20} h={20}><circle cx="10.500" cy="10" r="9.500" fill="#1374c6" stroke="none" /><path d="M1 10A9.500 9.500 0 0 1 20 9c0 3-2.500 4.500-5 4.500-3 0-3-1.500-2.500-2.500C13 8 10.500 6.500 8 6.500 4.500 6.500 2 8 1 10z" fill="#48d2a0" stroke="none" /><path d="M1 10C1.500 4 6 .5 10.500.5 6 3 4 6 1 10z" fill="#35b5e5" stroke="none" /><path d="M0 13h10v6.500H0z" fill="#d18820" stroke="none" /><path d="M3.500 13v-1.500h3V13M0 16h10" stroke="#7a4a10" /></Svg>
      </Cell>
      <div className="ml-[1px] flex h-full w-[38px] items-center justify-center border-b-2 border-[#76b9ed] bg-[#464848]">
        <Svg w={18} h={17}><path d="M5 0h13v17H5z" fill="#21a366" stroke="none" /><path d="M11.500 0H18v5.500h-6.500z" fill="#33c481" stroke="none" /><path d="M5 8.500h13V17H5z" fill="#107c41" stroke="none" /><path d="M0 4h9.500v9.500H0z" fill="#185c37" stroke="none" /><path d="m3 6 3.500 5.500m0-5.500L3 11.500" stroke="#fff" strokeWidth="1.400" /></Svg>
      </div>
      <Cell className="w-[38px]">
        <Svg w={17} h={12}><path d="M0 0h17v12H0z" fill="#8fd3f5" stroke="none" /><path d="M9 2h6.500v8H9z" fill="#5db4e6" stroke="#c9ecfb" /><circle cx="5.500" cy="5" r="2.500" fill="#d6e26a" stroke="#4c9fd6" /><path d="M1.500 9.500h6" stroke="#3d91c9" /></Svg>
      </Cell>
      <Cell className="w-[38px]"><Cell className="h-[14px] w-[14px] border border-[#999] bg-[#6d6d6d] text-[9px] text-[#2a2a2a]">M</Cell></Cell>
      <Cell className="ml-[4px] h-full w-[32px] border-b-2 border-[#76b9ed]">
        <Svg w={18}><circle cx="9" cy="9" r="8.300" fill="#222" stroke="#ddd" /><path d="M6 3c-.5 3.500 1 5.500 3.500 6 1.500-2.500 3.500-3 6-2M9.500 9c-1 3-3 4.500-6.500 4" stroke="#ddd" strokeWidth="1.500" /><circle cx="13.500" cy="13" r="4.600" fill="#f00" stroke="none" /></Svg>
      </Cell>
      <Cell className="ml-[315px] w-[18px]"><Svg w={10} h={6}><path d="m.5 5.500 4.500-5 4.500 5" stroke="#eee" /></Svg></Cell>
      <Cell className="w-[19px]"><Svg w={13} h={9}><path d="M3 9a3 3 0 0 1 0-5.500A4 4 0 0 1 10 3a3 3 0 0 1 .5 6z" fill="#2a8fdc" stroke="none" /><path d="m2 0 9 9" stroke="#1c1d1d" /></Svg></Cell>
      <Cell className="w-[19px]"><Svg w={8} h={13}><rect x="2" width="4.500" height="8.500" rx="2" fill="#fff" stroke="none" /><path d="M.8 6v2.500c0 2 6.800 2 6.800 0V6M4.200 10v2.500" stroke="#eee" /></Svg></Cell>
      <Cell className="w-[19px]"><Svg w={13} h={10}><path d="M2 3.500h10v6H2z" fill="#eee" stroke="#fff" /><path d="M0 1.500h5M2.500 0v4" stroke="#eee" strokeWidth="1.300" /></Svg></Cell>
      <Cell className="w-[19px]"><Svg w={13} h={13}><circle cx="6" cy="6" r="5.500" stroke="#eee" /><ellipse cx="6" cy="6" rx="2.500" ry="5.500" stroke="#eee" /><path d="M.5 4h11M.5 8h7" stroke="#eee" /><circle cx="10" cy="10" r="2.700" fill="#1c1d1d" stroke="#eee" /><path d="m8.500 8.500 3 3" stroke="#eee" /></Svg></Cell>
      <Cell className="w-[16px]"><Svg w={12} h={9}><path d="M.5 2.500H2.500L5.500.5v8L2.500 6.500H.5zM7.500 2.500l4 4m0-4-4 4" stroke="#eee" /></Svg></Cell>
      <Fit w={18} className="ml-[7px] text-[9.5px]">ENG</Fit>
      <div className="ml-[12px] flex w-[37px] flex-col items-center text-[9.5px] leading-[14px]">
        <Fit w={33}>4:34 PM</Fit>
        <Fit w={37}>5/3/2025</Fit>
      </div>
      <Cell className="ml-[15px] w-[20px]">
        <Svg w={18} h={19}><path d="M0 1h13v10H6l-2.500 2.500V11H0z" fill="#fff" stroke="none" /><path d="M2.500 4h8M2.500 6.500h8" stroke="#555" /><circle cx="12.500" cy="13" r="5.500" fill="#333" stroke="#aaa" /><text x="12.500" y="16.200" textAnchor="middle" fontSize="9" fill="#fff" stroke="none">2</text></Svg>
      </Cell>
      <div className="ml-[11px] h-full w-px bg-[#555]" />
    </div>
  )
}

export default function App() {
  return (
    <div className="h-[720px] w-[1280px] overflow-hidden bg-black pt-[20px] font-['Open_Sans',sans-serif]">
      <div className="flex h-[668px] w-[1174px] flex-col overflow-hidden bg-[#f0f0f0]">
        <TitleBar />
        <TabBar />
        <Ribbon />
        <FormulaBar />
        <Sheet />
        <SheetTabs />
        <StatusBar />
        <Taskbar />
      </div>
    </div>
  )
}
